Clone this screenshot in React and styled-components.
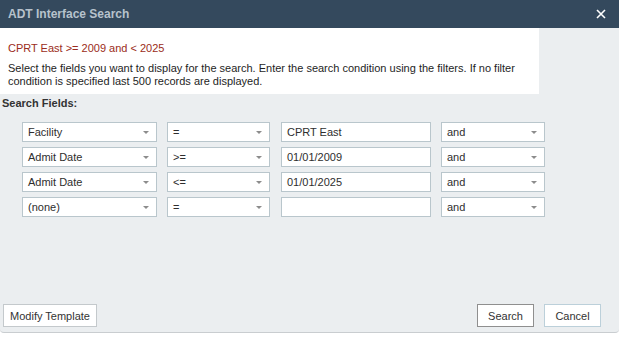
import React from "react";
import styled, { createGlobalStyle } from "styled-components";

const GlobalStyle = createGlobalStyle`
  html, body {
    margin: 0;
    padding: 0;
    background: #ffffff;
  }
  body {
    font-family: "Liberation Sans", Arial, sans-serif;
    font-size: 11px;
    color: #333333;
  }
`;

const rows = [
  { field: "Facility", op: "=", value: "CPRT East", join: "and" },
  { field: "Admit Date", op: ">=", value: "01/01/2009", join: "and" },
  { field: "Admit Date", op: "<=", value: "01/01/2025", join: "and" },
  { field: "(none)", op: "=", value: "", join: "and" },
];

function App() {
  return (
    <>
      <GlobalStyle />
      <Dialog>
        <TitleBar>
          <Title>ADT Interface Search</Title>
          <CloseButton aria-label="close">
            <svg width="10" height="10" viewBox="0 0 10 10">
              <path d="M1 1L9 9M9 1L1 9" stroke="#ffffff" strokeWidth="1.6" />
            </svg>
          </CloseButton>
        </TitleBar>

        <InfoPanel>
          <Criteria>CPRT East &gt;= 2009 and &lt; 2025</Criteria>
          <Help>
            Select the fields you want to display for the search. Enter the search
            condition using the filters. If no filter condition is specified last 500
            records are displayed.
          </Help>
        </InfoPanel>

        <SectionLabel>Search Fields:</SectionLabel>

        <FilterGrid>
          {rows.map((row, index) => (
            <FilterRow key={index}>
              <Select width={135}>
                <span>{row.field}</span>
                <Arrow />
              </Select>
              <Select width={103}>
                <span>{row.op}</span>
                <Arrow />
              </Select>
              <TextBox>{row.value}</TextBox>
              <Select width={104}>
                <span>{row.join}</span>
                <Arrow />
              </Select>
            </FilterRow>
          ))}
        </FilterGrid>

        <Footer>
          <Button border="#c4c9cc" width={94}>
            Modify Template
          </Button>
          <RightButtons>
            <Button border="#8f8f8f" width={57}>
              Search
            </Button>
            <Button border="#bcd0da" width={57}>
              Cancel
            </Button>
          </RightButtons>
        </Footer>
      </Dialog>
    </>
  );
}

const Arrow = styled.i`
  width: 0;
  height: 0;
  border-left: 3.5px solid transparent;
  border-right: 3.5px solid transparent;
  border-top: 3.5px solid #8c8c8c;
  margin-right: 1px;
`;

const Dialog = styled.div`
  width: 619px;
  height: 333px;
  display: flex;
  flex-direction: column;
  background: #ebeef0;
  border-bottom: 1px solid #c9cdd0;
  border-radius: 0 0 4px 4px;
  box-sizing: border-box;
`;

const TitleBar = styled.div`
  height: 28px;
  background: #34495d;
  display: flex;
  align-items: center;
  justify-content: space-between;
  padding: 0 13px 0 8px;
  flex-shrink: 0;
`;

const Title = styled.div`
  color: #b7c2cc;
  font-weight: bold;
  font-size: 12px;
`;

const CloseButton = styled.div`
  display: flex;
  align-items: center;
`;

const InfoPanel = styled.div`
  width: 539px;
  background: #ffffff;
  padding: 13px 8px 4px 8px;
  box-sizing: border-box;
  height: 66px;
`;

const Criteria = styled.div`
  color: #9b2c20;
  line-height: 14px;
  margin-bottom: 7px;
`;

const Help = styled.div`
  color: #1e1e1e;
  line-height: 13px;
  width: 520px;
`;

const SectionLabel = styled.div`
  font-weight: bold;
  padding: 2px 0 0 2px;
  line-height: 14px;
  color: #333333;
`;

const FilterGrid = styled.div`
  display: flex;
  flex-direction: column;
  gap: 5px;
  margin: 12px 0 0 22px;
`;

const FilterRow = styled.div`
  display: flex;
  gap: 10px;
`;

const Field = styled.div`
  height: 20px;
  box-sizing: border-box;
  background: #ffffff;
  border: 1px solid #b9c6cc;
  padding: 0 6px 0 5px;
  display: flex;
  align-items: center;
  color: #2e2e2e;
`;

const Select = styled(Field)`
  width: ${(p) => p.width}px;
  justify-content: space-between;
`;

const TextBox = styled(Field)`
  width: 150px;
  margin-left: 1px;
`;

const Footer = styled.div`
  margin-top: auto;
  display: flex;
  justify-content: space-between;
  align-items: flex-end;
  padding: 0 18px 5px 3px;
`;

const RightButtons = styled.div`
  display: flex;
  gap: 10px;
`;

const Button = styled.div`
  width: ${(p) => p.width}px;
  height: 23px;
  box-sizing: border-box;
  border: 1px solid ${(p) => p.border};
  background: #ffffff;
  display: flex;
  align-items: center;
  justify-content: center;
  color: #333333;
`;

export default App;
